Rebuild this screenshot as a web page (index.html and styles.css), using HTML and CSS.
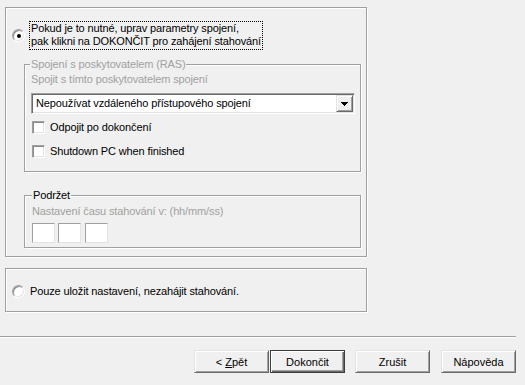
FILE: index.html
```html
<!DOCTYPE html>
<html lang="cs">
<head>
  <meta charset="UTF-8" />
  <title>Dokončení</title>
  <link rel="stylesheet" href="styles.css">
</head>
<body>
  <div class="wizard">
    <div class="panel panel-main">
      <div class="option">
        <span class="radio checked"></span>
        <label class="focus">Pokud je to nutné, uprav parametry spojení,<br>pak klikni na DOKONČIT pro zahájení stahování</label>
      </div>

      <div class="group group-ras">
        <span class="legend disabled">Spojení s poskytovatelem (RAS)</span>
        <div class="caption disabled">Spojit s tímto poskytovatelem spojení</div>
        <div class="combo">
          <span class="combo-text">Nepoužívat vzdáleného přístupového spojení</span>
          <span class="combo-btn">
            <svg width="7" height="4" viewBox="0 0 7 4" shape-rendering="crispEdges"><path d="M0 0h7v1h-1v1h-1v1h-1v1h-1v-1h-1v-1h-1v-1h-1z" fill="#000"/></svg>
          </span>
        </div>
        <div class="check"><span class="box"></span>Odpojit po dokončení</div>
        <div class="check check-second"><span class="box"></span>Shutdown PC when finished</div>
      </div>

      <div class="group group-hold">
        <span class="legend legend-hold">Podržet</span>
        <div class="caption disabled">Nastavení času stahování v: (hh/mm/ss)</div>
        <div class="time">
          <span class="field"></span>
          <span class="field"></span>
          <span class="field"></span>
        </div>
      </div>
    </div>

    <div class="panel panel-save">
      <div class="option">
        <span class="radio"></span>
        <span class="option-text">Pouze uložit nastavení, nezahájit stahování.</span>
      </div>
    </div>

    <div class="separator"></div>

    <div class="buttons">
      <button class="btn">&lt; <u>Z</u>pět</button>
      <button class="btn btn-default">Dokončit</button>
      <button class="btn btn-cancel">Zrušit</button>
      <button class="btn btn-help">Nápověda</button>
    </div>
  </div>
</body>
</html>
```

FILE: styles.css
```css
body {
  margin: 0;
  background: #f0f0f0;
  font-family: "Liberation Sans", Arial, sans-serif;
  font-size: 11px;
  letter-spacing: -0.13px;
  color: #000;
}
.wizard {
  width: 525px;
  height: 385px;
  padding-top: 7px;
  box-sizing: border-box;
}
.panel {
  margin-left: 5px;
  width: 362px;
  box-sizing: border-box;
  border: 1px solid #a0a0a0;
  box-shadow: 1px 1px 0 #fff, inset 1px 1px 0 #fff;
}
.panel-main {
  height: 250px;
  padding-top: 13px;
}
.option {
  display: flex;
  align-items: center;
  padding-left: 6px;
}
.radio {
  position: relative;
  flex: none;
  width: 13px;
  height: 13px;
  box-sizing: border-box;
  border-radius: 50%;
  background: #fff;
  border: 1px solid;
  border-color: #a0a0a0 #fff #fff #a0a0a0;
  box-shadow: inset 1px 1px 0 #8a8a8a, inset -1px -1px 0 #e3e3e3;
}
.radio.checked::after {
  content: "";
  position: absolute;
  left: 3.5px;
  top: 3.5px;
  width: 4px;
  height: 4px;
  border-radius: 50%;
  background: #000;
}
.focus {
  margin-left: 4px;
  border: 1px dotted #000;
  padding: 0 1px 1px;
  line-height: 13px;
}
.group {
  position: relative;
  margin-left: 18px;
  width: 337px;
  box-sizing: border-box;
  border: 1px solid #a0a0a0;
  box-shadow: 1px 1px 0 #fff, inset 1px 1px 0 #fff;
}
.group-ras {
  margin-top: 14px;
  height: 108px;
  padding: 8px 0 0 6px;
}
.group-hold {
  margin-top: 23px;
  height: 53px;
  padding: 9px 0 0 7px;
}
.legend {
  position: absolute;
  top: -7px;
  left: 5px;
  padding: 0 1px;
  background: #f0f0f0;
  line-height: 13px;
}
.legend-hold {
  left: 7px;
}
.disabled {
  color: #a0a0a0;
}
.caption {
  line-height: 13px;
}
.combo {
  display: flex;
  align-items: center;
  margin-top: 7px;
  width: 324px;
  height: 21px;
  box-sizing: border-box;
  background: #fff;
  border: 1px solid;
  border-color: #a0a0a0 #fff #fff #a0a0a0;
  box-shadow: inset 1px 1px 0 #696969, inset -1px -1px 0 #e3e3e3;
}
.combo-text {
  flex: 1;
  padding-left: 4px;
  line-height: 13px;
}
.combo-btn {
  display: flex;
  align-items: center;
  justify-content: center;
  width: 17px;
  height: 17px;
  margin-right: 1px;
  box-sizing: border-box;
  background: #f0f0f0;
  border: 1px solid;
  border-color: #e3e3e3 #696969 #696969 #e3e3e3;
  box-shadow: inset 1px 1px 0 #fff, inset -1px -1px 0 #a0a0a0;
}
.check {
  display: flex;
  align-items: center;
  margin: 7px 0 0 1px;
  height: 13px;
  line-height: 13px;
}
.check-second {
  margin-top: 11px;
}
.box {
  flex: none;
  width: 13px;
  height: 13px;
  margin-right: 5px;
  box-sizing: border-box;
  background: #fff;
  border: 1px solid;
  border-color: #a0a0a0 #fff #fff #a0a0a0;
  box-shadow: inset 1px 1px 0 #8a8a8a, inset -1px -1px 0 #e3e3e3;
}
.time {
  display: flex;
  gap: 3px;
  margin-top: 5px;
}
.field {
  width: 23px;
  height: 20px;
  box-sizing: border-box;
  background: #fff;
  border: 1px solid;
  border-color: #a0a0a0 #e3e3e3 #e3e3e3 #a0a0a0;
}
.field:last-child {
  margin-left: 1px;
}
.panel-save {
  display: flex;
  align-items: center;
  margin-top: 11px;
  height: 44px;
  padding-top: 2px;
}
.option-text {
  margin-left: 5px;
  line-height: 13px;
}
.separator {
  margin-top: 24px;
  width: 516px;
  border-top: 1px solid #a0a0a0;
  border-bottom: 1px solid #fff;
}
.buttons {
  display: flex;
  margin-top: 12px;
  padding-left: 194px;
}
.btn {
  width: 75px;
  height: 23px;
  padding: 0;
  font: inherit;
  color: #000;
  background: #f0f0f0;
  border: 1px solid;
  border-color: #e3e3e3 #696969 #696969 #e3e3e3;
  box-shadow: inset 1px 1px 0 #fff, inset -1px -1px 0 #a0a0a0;
}
.btn u {
  text-decoration: underline;
}
.btn-default {
  margin-left: 1px;
  border-color: #3c3c3c;
  box-shadow: inset 1px 1px 0 #fff, inset -1px -1px 0 #696969, inset -2px -2px 0 #a0a0a0;
}
.btn-cancel {
  margin-left: 10px;
}
.btn-help {
  margin-left: 11px;
}
```
